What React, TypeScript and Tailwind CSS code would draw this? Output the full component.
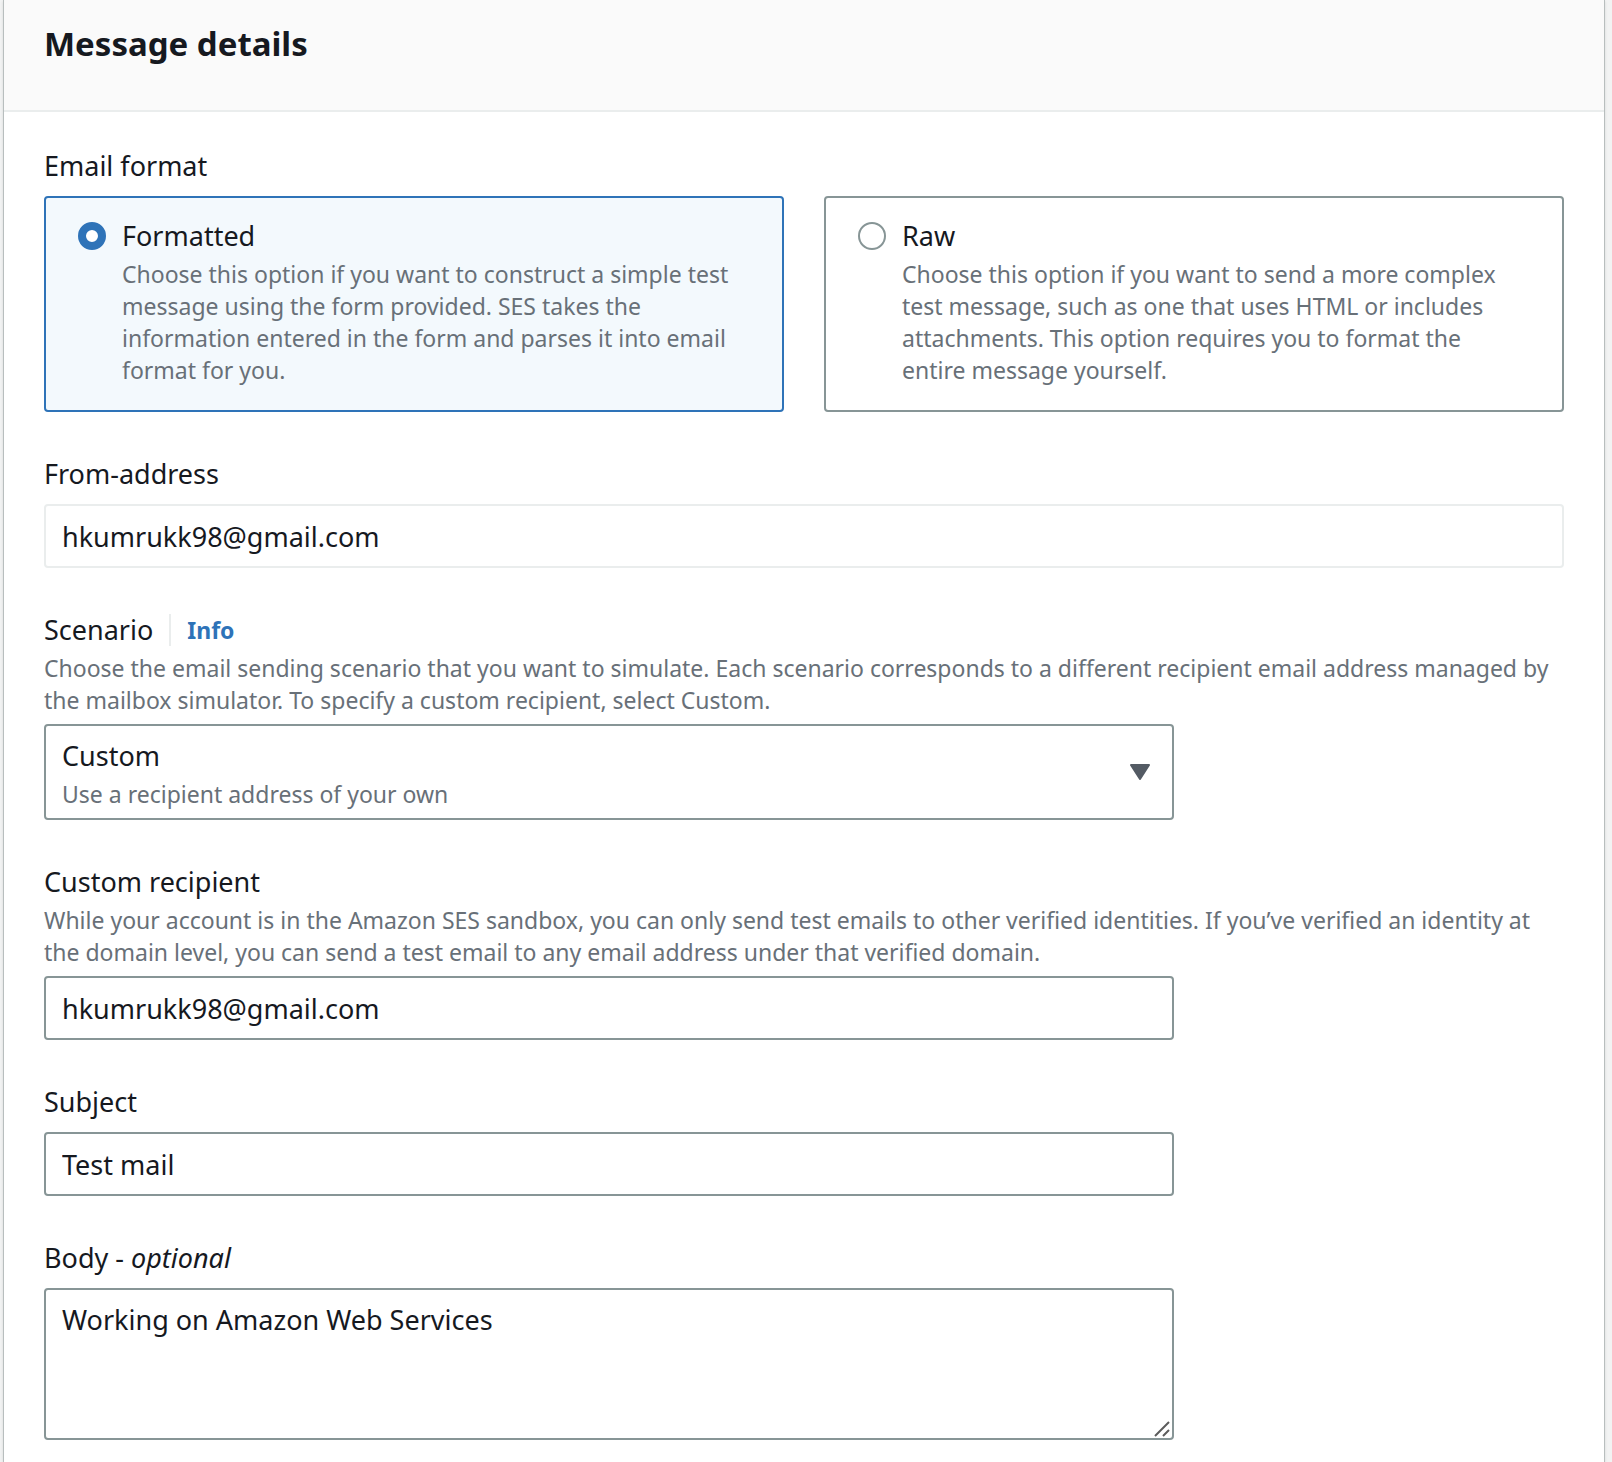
import { ReactNode } from "react";

const control =
  "block w-full rounded-sm border-2 border-[#879596] bg-white px-4 text-[27px] leading-[44px] text-[#16191f] outline-none";
const hint = "block text-[23px] leading-8 text-[#687078]";
const narrow = "w-[calc(75%-10px)]";

function Label({ htmlFor, children }: { htmlFor: string; children: ReactNode }) {
  return (
    <label htmlFor={htmlFor} className="block text-[27px] leading-[44px]">
      {children}
    </label>
  );
}

function Tile({
  value,
  title,
  text,
  defaultChecked,
}: {
  value: string;
  title: string;
  text: string;
  defaultChecked?: boolean;
}) {
  return (
    <label className="flex gap-4 rounded-sm border-2 border-[#879596] bg-white px-8 pt-4 pb-6 has-checked:border-[#2e73b8] has-checked:bg-[#f3f9fd]">
      <input
        type="radio"
        name="format"
        value={value}
        defaultChecked={defaultChecked}
        aria-label={title}
        className="mt-2 size-7 shrink-0 appearance-none rounded-full border-2 border-[#879596] bg-white checked:border-8 checked:border-[#2e73b8]"
      />
      <span className="min-w-0 flex-1">
        <span className="block text-[27px] leading-[44px]">{title}</span>
        <span className={hint}>{text}</span>
      </span>
    </label>
  );
}

export default function App() {
  return (
    <div className="min-h-screen bg-[#f2f3f3] pr-[7px] pl-[3px] font-['Noto_Sans',sans-serif] text-[#16191f]">
      <section className="min-h-screen border-x border-[#b8bebe] bg-white shadow-sm">
        <header className="border-b-2 border-[#eaeded] bg-[#fafafa] px-10 pt-[22px] pb-11">
          <h2 className="text-[33px] leading-[44px] font-bold">Message details</h2>
        </header>

        <form className="flex flex-col gap-10 px-10 pt-8 pb-5">
          <fieldset>
            <legend className="mb-2 text-[27px] leading-[44px]">Email format</legend>
            <div className="grid grid-cols-2 gap-10">
              <Tile
                value="formatted"
                title="Formatted"
                defaultChecked
                text="Choose this option if you want to construct a simple test message using the form provided. SES takes the information entered in the form and parses it into email format for you."
              />
              <Tile
                value="raw"
                title="Raw"
                text="Choose this option if you want to send a more complex test message, such as one that uses HTML or includes attachments. This option requires you to format the entire message yourself."
              />
            </div>
          </fieldset>

          <div>
            <Label htmlFor="from">From-address</Label>
            <input
              id="from"
              readOnly
              defaultValue="hkumrukk98@gmail.com"
              className="mt-2 block h-16 w-full rounded-sm border-2 border-[#eaeded] bg-white px-4 text-[27px] leading-[44px] outline-none"
            />
          </div>

          <div>
            <div className="flex items-center">
              <Label htmlFor="scenario">Scenario</Label>
              <a
                href="#info"
                className="ml-4 border-l-2 border-[#eaeded] pl-4 text-[23px] leading-8 font-bold text-[#2e73b8]"
              >
                Info
              </a>
            </div>
            <p className={hint}>
              Choose the email sending scenario that you want to simulate. Each scenario corresponds to a different
              recipient email address managed by the mailbox simulator. To specify a custom recipient, select Custom.
            </p>
            <div className={`relative mt-2 ${narrow}`}>
              <select id="scenario" aria-describedby="scenario-note" className={`${control} h-24 appearance-none pt-2 pb-10`}>
                <option>Custom</option>
              </select>
              <span
                id="scenario-note"
                className="pointer-events-none absolute bottom-2.5 left-[18px] text-[23px] leading-8 text-[#687078]"
              >
                Use a recipient address of your own
              </span>
              <svg
                aria-hidden="true"
                viewBox="0 0 20 16"
                className="pointer-events-none absolute top-10 right-6 h-4 w-5 fill-[#545b64] stroke-[#545b64]"
              >
                <path d="M1 1H19L10 15Z" strokeWidth="2" strokeLinejoin="round" />
              </svg>
            </div>
          </div>

          <div>
            <Label htmlFor="recipient">Custom recipient</Label>
            <p className={hint}>
              While your account is in the Amazon SES sandbox, you can only send test emails to other verified
              identities. If you’ve verified an identity at the domain level, you can send a test email to any email
              address under that verified domain.
            </p>
            <div className={`mt-2 ${narrow}`}>
              <input id="recipient" type="email" defaultValue="hkumrukk98@gmail.com" className={`${control} h-16`} />
            </div>
          </div>

          <div>
            <Label htmlFor="subject">Subject</Label>
            <div className={`mt-2 ${narrow}`}>
              <input id="subject" defaultValue="Test mail" className={`${control} h-16`} />
            </div>
          </div>

          <div>
            <Label htmlFor="body">
              Body - <i>optional</i>
            </Label>
            <div className={`relative mt-2 ${narrow}`}>
              <textarea
                id="body"
                defaultValue="Working on Amazon Web Services"
                className={`${control} h-38 resize-none py-2`}
              />
              <svg
                aria-hidden="true"
                viewBox="0 0 16 16"
                className="pointer-events-none absolute right-1 bottom-[3px] size-4 fill-none stroke-[#5c5c5c]"
              >
                <path d="M1 15L15 1M9 15L15 9" strokeWidth="2" />
              </svg>
            </div>
          </div>
        </form>
      </section>
    </div>
  );
}
